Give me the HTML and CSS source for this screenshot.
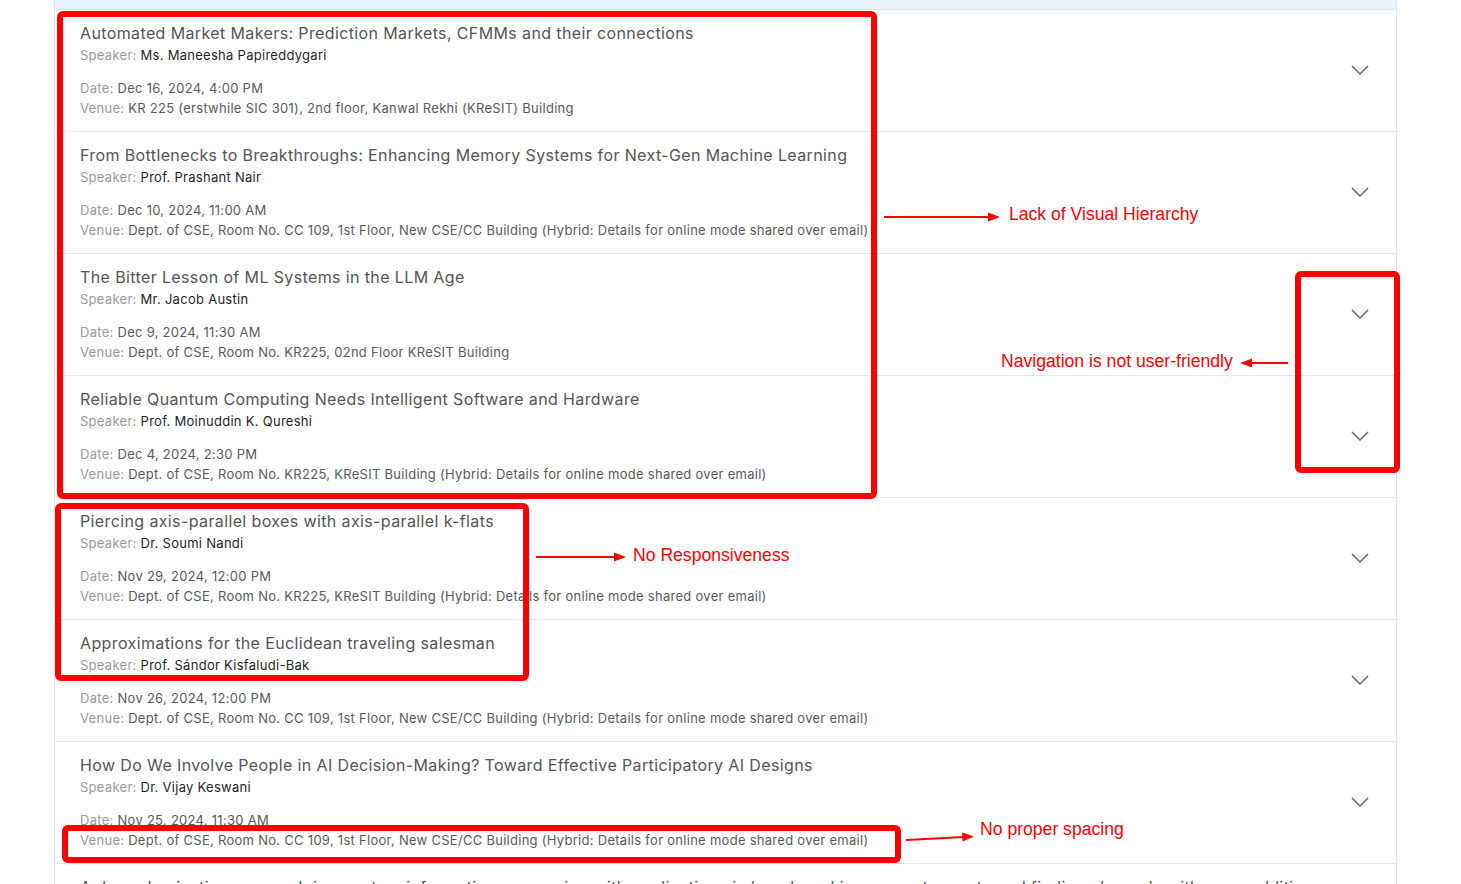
FILE: index.html
```html
<!DOCTYPE html>
<html lang="en">
<head>
<meta charset="utf-8">
<title>Seminars</title>
<link rel="stylesheet" href="styles.css">
</head>
<body>
<div class="page">
  <div class="list">
    <div class="list-head"></div>

    <div class="item">
      <div class="info">
        <div class="title">Automated Market Makers: Prediction Markets, CFMMs and their connections</div>
        <div class="meta"><span class="lbl">Speaker:</span> <span class="who">Ms. Maneesha Papireddygari</span></div>
        <div class="meta when"><span class="lbl">Date:</span> <span class="val">Dec 16, 2024, 4:00 PM</span></div>
        <div class="meta"><span class="lbl">Venue:</span> <span class="val">KR 225 (erstwhile SIC 301), 2nd floor, Kanwal Rekhi (KReSIT) Building</span></div>
      </div>
      <svg class="chev" viewBox="0 0 18 10" width="18" height="10"><path d="M1 1 L9 9 L17 1"/></svg>
    </div>

    <div class="item">
      <div class="info">
        <div class="title">From Bottlenecks to Breakthroughs: Enhancing Memory Systems for Next-Gen Machine Learning</div>
        <div class="meta"><span class="lbl">Speaker:</span> <span class="who">Prof. Prashant Nair</span></div>
        <div class="meta when"><span class="lbl">Date:</span> <span class="val">Dec 10, 2024, 11:00 AM</span></div>
        <div class="meta"><span class="lbl">Venue:</span> <span class="val">Dept. of CSE, Room No. CC 109, 1st Floor, New CSE/CC Building (Hybrid: Details for online mode shared over email)</span></div>
      </div>
      <svg class="chev" viewBox="0 0 18 10" width="18" height="10"><path d="M1 1 L9 9 L17 1"/></svg>
    </div>

    <div class="item">
      <div class="info">
        <div class="title">The Bitter Lesson of ML Systems in the LLM Age</div>
        <div class="meta"><span class="lbl">Speaker:</span> <span class="who">Mr. Jacob Austin</span></div>
        <div class="meta when"><span class="lbl">Date:</span> <span class="val">Dec 9, 2024, 11:30 AM</span></div>
        <div class="meta"><span class="lbl">Venue:</span> <span class="val">Dept. of CSE, Room No. KR225, 02nd Floor KReSIT Building</span></div>
      </div>
      <svg class="chev" viewBox="0 0 18 10" width="18" height="10"><path d="M1 1 L9 9 L17 1"/></svg>
    </div>

    <div class="item">
      <div class="info">
        <div class="title">Reliable Quantum Computing Needs Intelligent Software and Hardware</div>
        <div class="meta"><span class="lbl">Speaker:</span> <span class="who">Prof. Moinuddin K. Qureshi</span></div>
        <div class="meta when"><span class="lbl">Date:</span> <span class="val">Dec 4, 2024, 2:30 PM</span></div>
        <div class="meta"><span class="lbl">Venue:</span> <span class="val">Dept. of CSE, Room No. KR225, KReSIT Building (Hybrid: Details for online mode shared over email)</span></div>
      </div>
      <svg class="chev" viewBox="0 0 18 10" width="18" height="10"><path d="M1 1 L9 9 L17 1"/></svg>
    </div>

    <div class="item">
      <div class="info">
        <div class="title">Piercing axis-parallel boxes with axis-parallel k-flats</div>
        <div class="meta"><span class="lbl">Speaker:</span> <span class="who">Dr. Soumi Nandi</span></div>
        <div class="meta when"><span class="lbl">Date:</span> <span class="val">Nov 29, 2024, 12:00 PM</span></div>
        <div class="meta"><span class="lbl">Venue:</span> <span class="val">Dept. of CSE, Room No. KR225, KReSIT Building (Hybrid: Details for online mode shared over email)</span></div>
      </div>
      <svg class="chev" viewBox="0 0 18 10" width="18" height="10"><path d="M1 1 L9 9 L17 1"/></svg>
    </div>

    <div class="item">
      <div class="info">
        <div class="title">Approximations for the Euclidean traveling salesman</div>
        <div class="meta"><span class="lbl">Speaker:</span> <span class="who">Prof. Sándor Kisfaludi-Bak</span></div>
        <div class="meta when"><span class="lbl">Date:</span> <span class="val">Nov 26, 2024, 12:00 PM</span></div>
        <div class="meta"><span class="lbl">Venue:</span> <span class="val">Dept. of CSE, Room No. CC 109, 1st Floor, New CSE/CC Building (Hybrid: Details for online mode shared over email)</span></div>
      </div>
      <svg class="chev" viewBox="0 0 18 10" width="18" height="10"><path d="M1 1 L9 9 L17 1"/></svg>
    </div>

    <div class="item">
      <div class="info">
        <div class="title">How Do We Involve People in AI Decision-Making? Toward Effective Participatory AI Designs</div>
        <div class="meta"><span class="lbl">Speaker:</span> <span class="who">Dr. Vijay Keswani</span></div>
        <div class="meta when"><span class="lbl">Date:</span> <span class="val">Nov 25, 2024, 11:30 AM</span></div>
        <div class="meta"><span class="lbl">Venue:</span> <span class="val">Dept. of CSE, Room No. CC 109, 1st Floor, New CSE/CC Building (Hybrid: Details for online mode shared over email)</span></div>
      </div>
      <svg class="chev" viewBox="0 0 18 10" width="18" height="10"><path d="M1 1 L9 9 L17 1"/></svg>
    </div>

    <div class="item">
      <div class="info">
        <div class="title">A derandomization approach in quantum information processing with applications in benchmarking a quantum gate and finding channels with superadditive</div>
        <div class="meta"><span class="lbl">Speaker:</span> <span class="who">Prof. Somshubhro Bandyopadhyay</span></div>
        <div class="meta when"><span class="lbl">Date:</span> <span class="val">Nov 22, 2024, 11:30 AM</span></div>
        <div class="meta"><span class="lbl">Venue:</span> <span class="val">Dept. of CSE, Room No. KR225, KReSIT Building</span></div>
      </div>
      <svg class="chev" viewBox="0 0 18 10" width="18" height="10"><path d="M1 1 L9 9 L17 1"/></svg>
    </div>
  </div>

  <svg class="marks" width="1461" height="884" viewBox="0 0 1461 884">
    <rect x="60" y="14" width="814" height="482" rx="3"/>
    <rect x="1298" y="274" width="99" height="196" rx="3"/>
    <rect x="58" y="506" width="468" height="172" rx="3"/>
    <rect x="65" y="828" width="833" height="32" rx="3"/>
    <line x1="884" y1="217" x2="990" y2="217"/>
    <polygon points="1000,217 988,212.5 988,221.5"/>
    <line x1="1288" y1="363" x2="1250" y2="363"/>
    <polygon points="1240,363 1252,358.5 1252,367.5"/>
    <line x1="536" y1="557" x2="616" y2="557"/>
    <polygon points="626,557 614,552.5 614,561.5"/>
    <line x1="906" y1="840" x2="964" y2="837"/>
    <polygon points="974,836.5 962,832.5 962.5,841.5"/>
  </svg>
  <div class="note n1">Lack of Visual Hierarchy</div>
  <div class="note n2">Navigation is not user-friendly</div>
  <div class="note n3">No Responsiveness</div>
  <div class="note n4">No proper spacing</div>
</div>
</body>
</html>
```

FILE: styles.css
```css
html, body {
  margin: 0;
  padding: 0;
  background: #ffffff;
}
body {
  height: 884px;
  overflow: hidden;
  font-family: Inter, "Noto Sans", "Liberation Sans", sans-serif;
}
.page {
  position: relative;
  width: 1461px;
  height: 884px;
}
.list {
  margin-left: 54px;
  width: 1343px;
  box-sizing: border-box;
  border-left: 1px solid #e6e7e9;
  border-right: 1px solid #e6e7e9;
}
.list-head {
  height: 9px;
  background: #e8f3fc;
  border-bottom: 1px solid #e3e6ea;
}
.item {
  display: flex;
  align-items: center;
  justify-content: space-between;
  height: 122px;
  box-sizing: border-box;
  padding: 11px 27px 13px 25px;
  border-bottom: 1px solid #e6e7e9;
}
.info {
  flex: 1;
  min-width: 0;
  align-self: flex-start;
}
.title {
  font-size: 16px;
  line-height: 24px;
  color: #555555;
  white-space: nowrap;
  letter-spacing: 0.38px;
}
.meta {
  font-size: 13px;
  line-height: 20px;
  white-space: nowrap;
  letter-spacing: 0.28px;
}
.meta.when {
  margin-top: 13px;
}
.lbl {
  color: #9a9a9a;
}
.who {
  color: #1f1f1f;
}
.val {
  color: #5a5a5a;
}
.chev {
  flex: none;
  margin-left: 20px;
  fill: none;
  stroke: #666666;
  stroke-width: 1.5;
}
.marks {
  position: absolute;
  left: 0;
  top: 0;
  pointer-events: none;
}
.marks rect {
  fill: none;
  stroke: #ff0000;
  stroke-width: 6;
}
.marks line {
  stroke: #ff0000;
  stroke-width: 2;
}
.marks polygon {
  fill: #ff0000;
}
.note {
  position: absolute;
  font-family: "Liberation Sans", Arial, sans-serif;
  font-size: 17.6px;
  line-height: 20px;
  color: #ff0000;
  white-space: nowrap;
}
.n1 { left: 1009px; top: 204px; }
.n2 { left: 1001px; top: 351px; }
.n3 { left: 633px; top: 545px; }
.n4 { left: 980px; top: 819px; }
```
